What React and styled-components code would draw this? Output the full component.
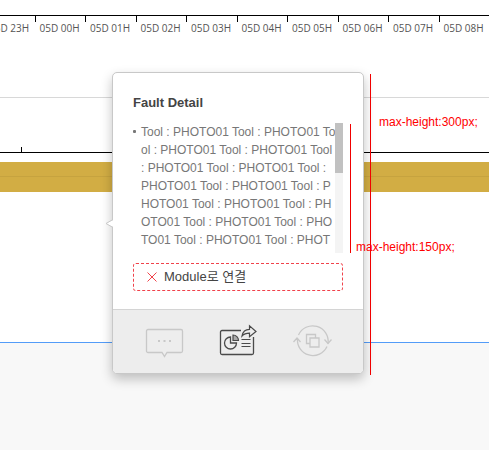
import React from "react";
import styled, { createGlobalStyle } from "styled-components";

const GlobalStyle = createGlobalStyle`
  * { box-sizing: border-box; }
  body {
    margin: 0;
    background: #f8f8f8;
    font-family: "Liberation Sans", Arial, "Noto Sans CJK KR", sans-serif;
  }
  h2, p, ul { margin: 0; padding: 0; }
`;

const Page = styled.main`
  position: relative;
  min-height: 100vh;
  overflow: hidden;
`;

const Timeline = styled.section`
  display: flex;
  flex-direction: column;
  padding-top: 15px;
  background: #fff;
  border-bottom: 1px solid #539cf8;
`;

const Axis = styled.div`
  display: flex;
  height: 82px;
  margin-left: -16px;
  border-top: 1px solid #000;
`;

const Hour = styled.div`
  flex: 1 1 0;
  min-width: 0;
  display: flex;
  align-items: flex-start;
  &::before {
    content: "";
    flex: none;
    width: 1px;
    height: 6px;
    background: #000;
  }
`;

const HourLabel = styled.span`
  padding: 5px 0 0 4px;
  font: 10px/14px "Open Sans", "Noto Sans", sans-serif;
  color: #555;
  white-space: nowrap;
`;

const Lane = styled.div`
  display: flex;
  align-items: flex-end;
  height: 56px;
  padding-left: 21px;
  border-top: 1px solid #d8d8d8;
  border-bottom: 1px solid #000;
`;

const LaneTick = styled.i`
  width: 1px;
  height: 5px;
  background: #000;
`;

const Track = styled.div`
  height: 189px;
  padding-top: 9px;
`;

const Band = styled.div`
  height: 30px;
  padding-top: 14px;
  background: #d2ad44;
  &::before {
    content: "";
    display: block;
    height: 1px;
    background: #c6a33f;
  }
`;

const Popover = styled.article`
  position: absolute;
  top: 72px;
  left: 112px;
  width: 252px;
  background: #fff;
  border: 1px solid #c8c8c8;
  border-radius: 5px;
  box-shadow: 0 5px 12px rgba(0, 0, 0, 0.24);
`;

const Pointer = styled.svg`
  position: absolute;
  top: 145px;
  left: -8px;
`;

const Body = styled.div`
  display: flex;
  flex-direction: column;
  padding: 20px 20px 18px;
`;

const Title = styled.h2`
  font-size: 13px;
  line-height: 20px;
  font-weight: 700;
  color: #444;
`;

const ScrollArea = styled.div`
  display: flex;
  height: 130px;
  max-height: 150px;
  margin-top: 10px;
  overflow: hidden;
`;

const FaultList = styled.ul`
  flex: 1;
  min-width: 0;
  margin-right: -2px;
  list-style: none;
`;

const FaultItem = styled.li`
  display: flex;
  font-size: 12px;
  line-height: 18px;
  color: #777;
  word-break: break-all;
  &::before {
    content: "";
    flex: none;
    width: 3px;
    height: 3px;
    margin: 7px 5px 0 0;
    border-radius: 1px;
    background: #777;
  }
`;

const ScrollTrack = styled.div`
  flex: none;
  width: 8px;
  background: #f4f4f4;
`;

const ScrollThumb = styled.div`
  height: 50px;
  background: #c1c1c1;
`;

const LinkButton = styled.button`
  display: flex;
  align-items: center;
  gap: 7px;
  height: 28px;
  margin-top: 10px;
  padding: 0 13px;
  border: 1px dashed #f0424a;
  border-radius: 3px;
  background: none;
  font-family: inherit;
  font-size: 13px;
  line-height: 18px;
  color: #444;
`;

const Footer = styled.footer`
  display: flex;
  justify-content: space-between;
  align-items: center;
  height: 64px;
  padding: 0 30px 2px 31px;
  border-top: 1px solid #d4d4d4;
  border-radius: 0 0 4px 4px;
  background: #ededed;
`;

const IconButton = styled.button`
  display: flex;
  padding: 0;
  border: 0;
  background: none;
  color: ${(p) => (p.$active ? "#4a4a4a" : "#c8c8c8")};
`;

const Guide = styled.div`
  position: absolute;
  top: ${(p) => p.$top}px;
  left: ${(p) => p.$left}px;
  width: 1px;
  height: ${(p) => p.$length}px;
  background: #f00000;
`;

const Note = styled.p`
  position: absolute;
  top: ${(p) => p.$top}px;
  left: ${(p) => p.$left}px;
  font-size: 12px;
  line-height: 16px;
  color: #f00;
  white-space: nowrap;
`;

const hours = [
  "05D 23H", "05D 00H", "05D 01H", "05D 02H", "05D 03H",
  "05D 04H", "05D 05H", "05D 06H", "05D 07H", "05D 08H",
];

const faultText = Array(16).fill("Tool : PHOTO01").join(" ");

const CommentIcon = () => (
  <svg width="40" height="40" viewBox="0 0 40 40" fill="none" stroke="currentColor" strokeWidth="1.3">
    <path d="M4 8.500h33a1.500 1.500 0 0 1 1.500 1.500v20a1.500 1.500 0 0 1-1.500 1.500H23l-2.500 4-2.500-4H4A1.500 1.500 0 0 1 2.500 30V10A1.500 1.500 0 0 1 4 8.500z" />
    <path d="M14 20h2M19.500 20h2M25 20h2" strokeWidth="2" />
  </svg>
);

const ReportIcon = () => (
  <svg width="40" height="40" viewBox="0 0 40 40" fill="none" stroke="currentColor" strokeWidth="1.3">
    <path d="M22 9.500H3A1.500 1.500 0 0 0 1.500 11v21A1.500 1.500 0 0 0 3 33.500h30a1.500 1.500 0 0 0 1.500-1.500V16" />
    <path d="M11.500 16a6 6 0 1 0 6 6h-6z" />
    <path d="M14 14v5.500h5.500A5.500 5.500 0 0 0 14 14z" fill="#aaa" strokeWidth="1.2" />
    <path d="M22.500 18.500h9M22.500 22.500h9M22.500 25.500h9" strokeWidth="1.2" />
    <path d="M23 15c.8-4.500 3.500-6.700 7.500-6.700V4.800l6.500 5.700-6.500 5.300v-3.600c-3.500 0-5.700.8-7.500 2.800z" strokeWidth="1.2" />
  </svg>
);

const SyncIcon = () => (
  <svg width="40" height="40" viewBox="0 0 40 40" fill="none" stroke="currentColor" strokeWidth="1.3">
    <path d="M5.500 14a15.500 15.500 0 0 1 29.500 8.500M34 25.500a15.500 15.500 0 0 1-29.500-8" />
    <path d="M31.500 18.500l3.500 4 3.500-4M.5 21l3.500-4 3.500 4" />
    <path d="M17 22.500h-3.500v-9h9V17M17 17h9v9h-9z" />
  </svg>
);

export default function App() {
  return (
    <Page>
      <GlobalStyle />
      <Timeline>
        <Axis>
          {hours.map((hour) => (
            <Hour key={hour}>
              <HourLabel>{hour}</HourLabel>
            </Hour>
          ))}
        </Axis>
        <Lane>
          <LaneTick />
        </Lane>
        <Track>
          <Band />
        </Track>
      </Timeline>

      <Popover>
        <Pointer width="9" height="11" viewBox="0 0 9 11">
          <path d="M9 1.500L1.500 5.500 9 9.500z" fill="#fff" />
          <path d="M8 1.500L1 5.500l7 4" fill="none" stroke="#c8c8c8" />
        </Pointer>
        <Body>
          <Title>Fault Detail</Title>
          <ScrollArea>
            <FaultList>
              <FaultItem>
                <p>{faultText}</p>
              </FaultItem>
            </FaultList>
            <ScrollTrack>
              <ScrollThumb />
            </ScrollTrack>
          </ScrollArea>
          <LinkButton type="button">
            <svg width="10" height="10" viewBox="0 0 10 10" stroke="#f0424a" aria-hidden="true">
              <path d="M.5.5l9 9M9.500.5l-9 9" />
            </svg>
            <span>Module로 연결</span>
          </LinkButton>
        </Body>
        <Footer>
          <IconButton type="button" aria-label="Comment">
            <CommentIcon />
          </IconButton>
          <IconButton type="button" aria-label="Share report" $active>
            <ReportIcon />
          </IconButton>
          <IconButton type="button" aria-label="Sync">
            <SyncIcon />
          </IconButton>
        </Footer>
      </Popover>

      <Guide $top={74} $left={370} $length={301} />
      <Guide $top={124} $left={350} $length={129} />
      <Note $top={114} $left={379}>max-height:300px;</Note>
      <Note $top={239} $left={356}>max-height:150px;</Note>
    </Page>
  );
}
